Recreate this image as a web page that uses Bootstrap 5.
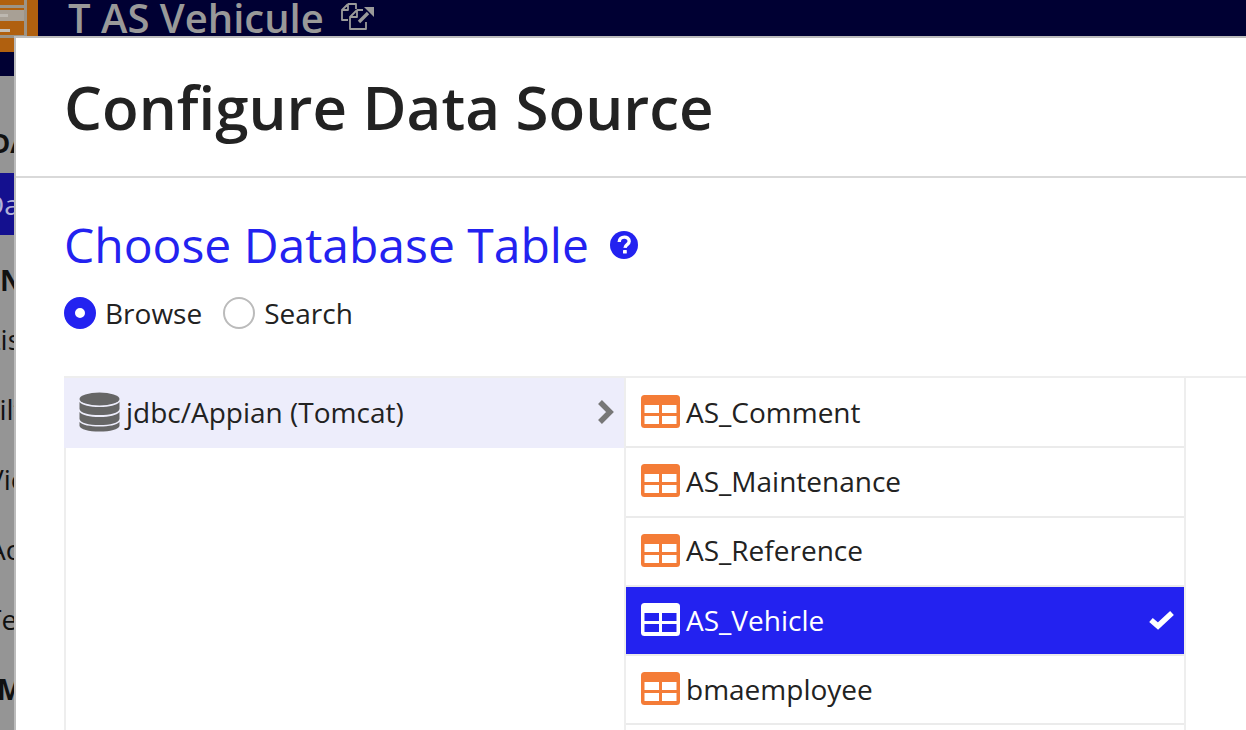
<!DOCTYPE html>
<html lang="en">
<head>
<meta charset="utf-8">
<title>Configure Data Source</title>
<link href="https://cdn.jsdelivr.net/npm/bootstrap@5.3.0/dist/css/bootstrap.min.css" rel="stylesheet">
<style>
html,body{height:730px;overflow:hidden;background:#959595;}
body{font-family:"Open Sans","Liberation Sans",sans-serif;color:#222;position:relative;}
.topbar{height:76px;background:#000033;color:#999;}
.logo-box{width:38px;height:52px;background:#b0600f;flex:none;}
.logo-box svg{display:block;}
.app-name{font-size:40px;font-weight:600;line-height:36px;margin-left:30px;white-space:nowrap;}
.ext-ico{margin-left:16px;margin-top:2px;flex:none;}
.side-rail{width:120px;font-size:28px;color:#111;overflow:hidden;white-space:nowrap;}
.rail-head{height:35px;margin-top:50px;font-weight:700;font-size:26px;line-height:35px;text-indent:-9px;}
.rail-sel{height:62px;margin-top:12px;background:#14108f;color:#b3b3d8;line-height:62px;text-indent:-16px;}
.rail-bold{font-weight:700;height:48px;line-height:48px;margin-top:21px;text-indent:0;}
.rail-item{line-height:70px;height:70px;}
.rail-bold2{font-weight:700;line-height:70px;height:70px;text-indent:-3px;}
.rail-item.i1{text-indent:-14px;}
.rail-item.i2{text-indent:-15px;}
.rail-item.i3{text-indent:-13px;}
.rail-item.i4{text-indent:-12px;}
.rail-item.i5{text-indent:-14px;}
.dlg{position:absolute;left:14px;top:36px;width:1232px;height:694px;background:#fff;border-top:2px solid #bcbcbc;border-left:2px solid #bcbcbc;overflow:hidden;}
.dlg-head{height:140px;border-bottom:2px solid #d9d9d9;padding-left:48px;padding-top:34px;}
.dlg-title{font-size:60px;font-weight:600;line-height:70px;margin:0;color:#222;}
.dlg-body{padding:35px 0 0 48px;}
.sec-title{font-size:48px;font-weight:400;color:#2322f0;line-height:64px;margin:0;}
.help-ico{margin-left:21px;}
.radios{margin-top:20px;height:32px;font-size:28px;line-height:32px;gap:21px;}
.rad{width:32px;height:32px;border-radius:50%;border:2px solid #bbb;background:#fff;flex:none;margin-right:9px;}
.rad.on{border:11.5px solid #2322f0;}
.picker{margin-top:47px;width:1300px;border-top:2px solid #eee;}
.pick-l{width:561px;border-left:2px solid #eee;height:400px;flex:none;}
.pick-src{height:70px;background:#ededfb;margin-left:-2px;padding:0 10px 3px 15px;font-size:28px;}
.db-ico{margin-right:6px;flex:none;}
.pick-r{width:562px;border-left:2px solid #eee;border-right:2px solid #eee;flex:none;margin-left:-1px;padding-top:1px;}
.tbl-row{height:69.3px;border-bottom:2px solid #ebebeb;padding:0 10px 2px 15px;font-size:28px;}
.tbl-row svg.tb{margin-right:6px;flex:none;}
.tbl-row.sel{background:#2322f0;color:#fff;}
.tbl-lab{line-height:36px;}
</style>
</head>
<body>
<div class="topbar d-flex align-items-start">
  <div class="logo-box">
    <svg width="38" height="38" viewBox="0 0 38 38"><rect x="0" y="0" width="24" height="38" fill="#b0600f"/><rect x="24" y="0" width="3" height="38" fill="#9c9488"/><rect x="0" y="5" width="24" height="3" fill="#9c9488"/><rect x="0" y="10" width="24" height="11" fill="#a8a095"/><rect x="0" y="14" width="8" height="3" fill="#bdb8b0"/><rect x="0" y="22" width="24" height="3" fill="#b0600f"/><rect x="0" y="29" width="10" height="3" fill="#c4bfb8"/><rect x="0" y="35" width="24" height="3" fill="#9c9488"/></svg>
  </div>
  <div class="app-name">T AS Vehicule</div>
  <svg class="ext-ico" width="35" height="28" viewBox="0 0 35 28" fill="none" stroke="#9a9a9a" stroke-width="1.800" stroke-linejoin="round"><path d="M8 2h8v5M8 2L2 8v10h6M8 2v6H2"/><path d="M17 8h6M17 8l-7 7v12h16v-7M17 8v7h-7"/><path d="M19 20L28 11" stroke-width="3.400"/><path d="M24 5h10v10z" fill="#9a9a9a" stroke="none"/></svg>
</div>
<div class="side-rail">
  <div class="rail-head">DATA</div>
  <div class="rail-sel">Data</div>
  <div class="rail-bold">News</div>
  <div class="rail-item i1">List</div>
  <div class="rail-item i2">Filters</div>
  <div class="rail-item i3">Views</div>
  <div class="rail-item i4">Actions</div>
  <div class="rail-item i5">Tests</div>
  <div class="rail-bold2">More</div>
</div>
<div class="dlg">
  <div class="dlg-head"><h1 class="dlg-title">Configure Data Source</h1></div>
  <div class="dlg-body">
    <div class="d-flex align-items-center">
      <h2 class="sec-title">Choose Database Table</h2>
      <svg class="help-ico" width="28" height="28" viewBox="0 0 28 28"><circle cx="14" cy="14" r="14" fill="#2322f0"/><path d="M9.200 11c.2-6.500 10-6.300 10-.8 0 3.500-4 3.100-4.200 6.600" fill="none" stroke="#fff" stroke-width="3.400"/><rect x="13" y="19" width="3.800" height="3.600" rx=".6" fill="#fff"/></svg>
    </div>
    <div class="radios d-flex align-items-center">
      <div class="d-flex align-items-center"><span class="rad on"></span><span>Browse</span></div>
      <div class="d-flex align-items-center"><span class="rad"></span><span>Search</span></div>
    </div>
    <div class="picker d-flex">
      <div class="pick-l">
        <div class="pick-src d-flex align-items-center">
          <svg width="41" height="40" viewBox="0 0 41 40" class="db-ico" fill="#666"><ellipse cx="20.500" cy="7" rx="20" ry="6.500"/><path d="M.5 10c3 3.500 10 5 20 5s17-1.500 20-5v7c-1 4-9 6-20 6s-19-2-20-6z"/><path d="M.5 20c3 3.500 10 5 20 5s17-1.500 20-5v7c-1 4-9 6-20 6s-19-2-20-6z"/><path d="M.5 30c3 3 10 4.500 20 4.500s17-1.500 20-4.500v4c-1 3.500-9 5.500-20 5.500s-19-2-20-5.500z"/></svg>
          <span class="flex-grow-1">jdbc/Appian (Tomcat)</span>
          <svg width="18" height="24" viewBox="0 0 18 24" fill="none" stroke="#777" stroke-width="5.500"><path d="M3 2l10 10-10 10"/></svg>
        </div>
      </div>
      <div class="pick-r">
        <div class="tbl-row d-flex align-items-center"><svg class="tb" width="39" height="33" viewBox="0 0 39 33"><use href="#tbl"/></svg><span class="tbl-lab">AS_Comment</span></div>
        <div class="tbl-row d-flex align-items-center"><svg class="tb" width="39" height="33" viewBox="0 0 39 33"><use href="#tbl"/></svg><span class="tbl-lab">AS_Maintenance</span></div>
        <div class="tbl-row d-flex align-items-center"><svg class="tb" width="39" height="33" viewBox="0 0 39 33"><use href="#tbl"/></svg><span class="tbl-lab">AS_Reference</span></div>
        <div class="tbl-row sel d-flex align-items-center"><svg class="tb" width="39" height="33" viewBox="0 0 39 33"><rect width="39" height="33" rx="3.500" fill="#fff"/><rect x="3.500" y="10" width="14.500" height="8" fill="#2322f0"/><rect x="21" y="10" width="14.500" height="8" fill="#2322f0"/><rect x="3.500" y="21" width="14.500" height="8" fill="#2322f0"/><rect x="21" y="21" width="14.500" height="8" fill="#2322f0"/></svg><span class="tbl-lab flex-grow-1">AS_Vehicle</span><svg width="25" height="20" viewBox="0 0 25 20" fill="none" stroke="#fff" stroke-width="5.500"><path d="M2 10l7 6L23 3"/></svg></div>
        <div class="tbl-row d-flex align-items-center"><svg class="tb" width="39" height="33" viewBox="0 0 39 33"><use href="#tbl"/></svg><span class="tbl-lab">bmaemployee</span></div>
      </div>
    </div>
  </div>
</div>
<svg width="0" height="0" class="position-absolute"><defs><g id="tbl"><rect width="39" height="33" rx="3.500" fill="#f47c37"/><rect x="3.500" y="10" width="14.500" height="8" fill="#fff"/><rect x="21" y="10" width="14.500" height="8" fill="#fff"/><rect x="3.500" y="21" width="14.500" height="8" fill="#fff"/><rect x="21" y="21" width="14.500" height="8" fill="#fff"/></g></defs></svg>
</body>
</html>
